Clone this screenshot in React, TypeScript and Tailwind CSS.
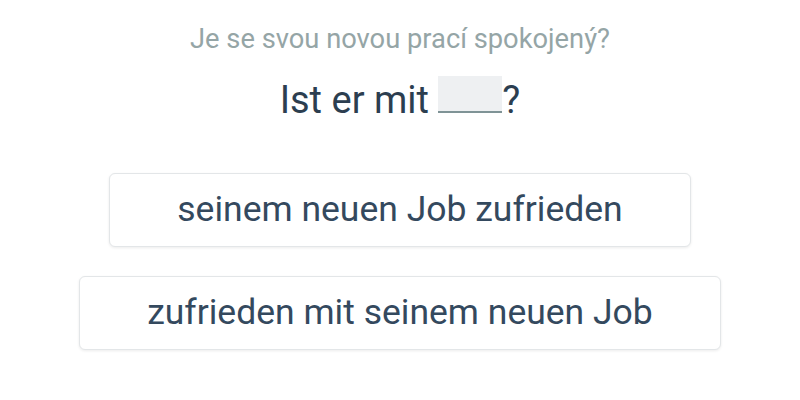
import React from "react";

const OPTIONS = ["seinem neuen Job zufrieden", "zufrieden mit seinem neuen Job"];

export default function App() {
  return (
    <div className="flex h-[400px] w-[800px] flex-col items-center bg-white font-['Roboto',sans-serif]">
      <p className="mt-[21px] text-[27.3px] leading-[36px] text-[#95a5a6]">Je se svou novou prací spokojený?</p>
      <h1 className="mt-[19px] flex items-baseline text-[38px] leading-[48px] text-[#2c3e50]">
        <span>Ist er mit&nbsp;</span>
        <span className="inline-block h-[37px] w-[64px] border-b-2 border-[#7f9396] bg-[#eef0f2]" />
        <span>?</span>
      </h1>
      <div className="mt-[49px] flex flex-col items-center gap-[29px]">
        {OPTIONS.map((o) => (
          <button
            key={o}
            className="h-[74px] rounded-[6px] border border-[#e3e6e8] bg-white px-[67px] text-[35.5px] text-[#34495e] shadow-[0_1px_3px_rgba(0,0,0,0.08)]"
          >
            {o}
          </button>
        ))}
      </div>
    </div>
  );
}
